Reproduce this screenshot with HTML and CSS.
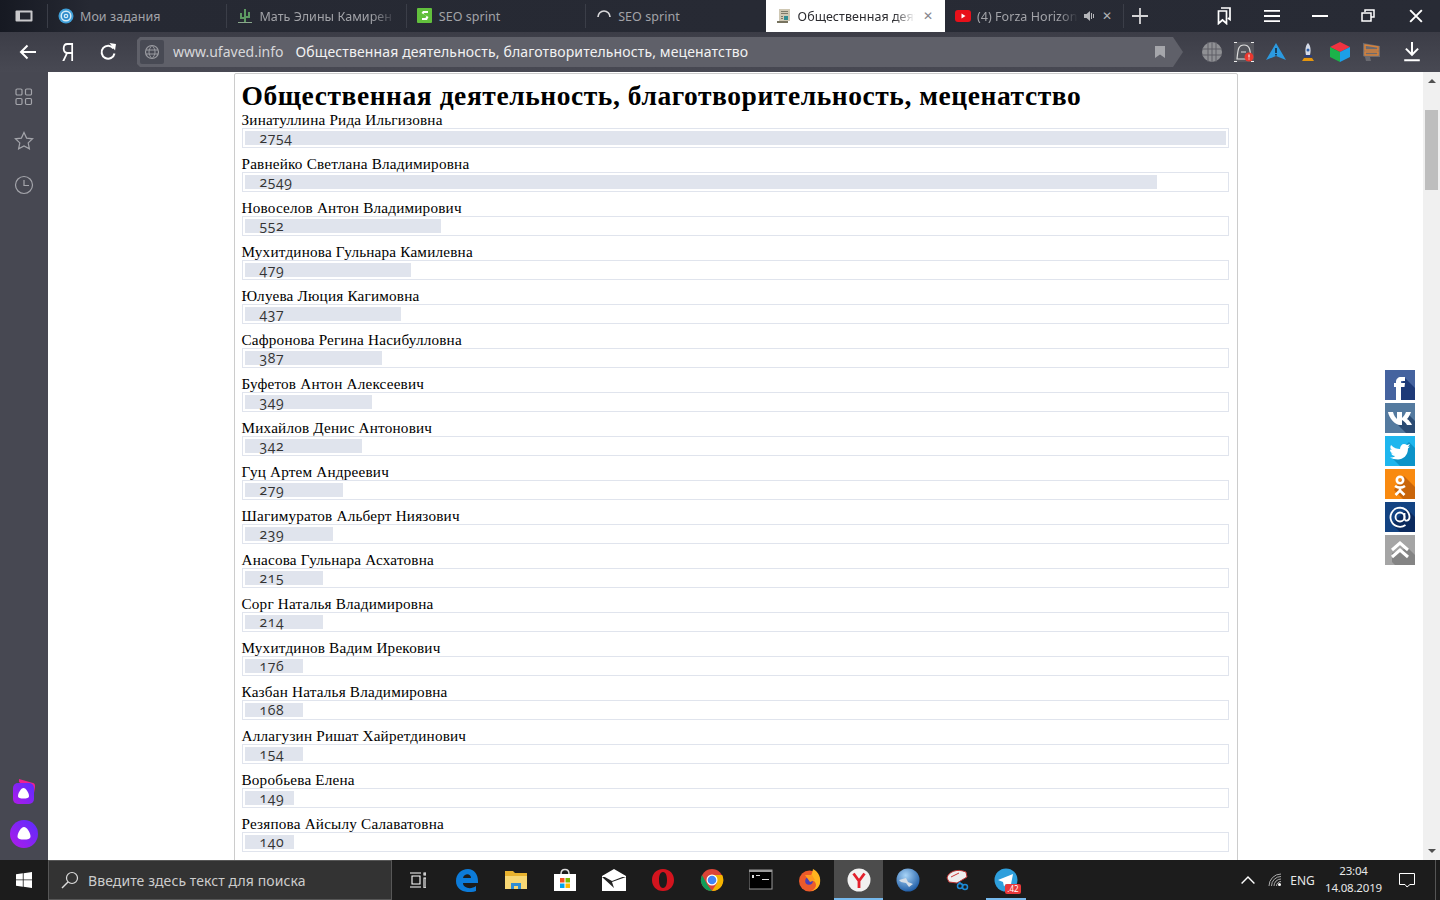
FILE: index.html
```html
<!DOCTYPE html>
<html lang="ru">
<head>
<meta charset="utf-8">
<title>Общественная деятельность</title>
<link rel="stylesheet" href="styles.css">
</head>
<body>
<div class="app">
  <header class="tabbar">
    <div class="tabs-toggle"><svg class="ico16" viewBox="0 0 18 12"><rect x="0.5" y="0.5" width="17" height="11" rx="1" fill="#c9c9cc"/><rect x="5" y="2.5" width="10.500" height="7" fill="#23262f"/></svg></div>
    <div class="tab sep"><svg class="favicon" viewBox="0 0 16 16"><circle cx="8" cy="8" r="7.500" fill="#3f9fd8"/><circle cx="8" cy="8" r="5.500" fill="#d5ecf8"/><circle cx="8" cy="8" r="4" fill="#2f8ccb"/><circle cx="8" cy="8" r="2.300" fill="#d5ecf8"/><circle cx="8" cy="8" r="1.100" fill="#2f8ccb"/></svg><span class="tab-title">Мои задания</span></div>
    <div class="tab sep"><svg class="favicon" viewBox="0 0 16 16"><path d="M7 1h2v13H7zM3 5h2v4h2v2H3zM11 4h2v6H9V8h2z" fill="#5d9a62"/><path d="M1 14h14v1H1z" fill="#8aa78c"/></svg><span class="tab-title tab-fade">Мать Элины Камирен</span></div>
    <div class="tab sep"><svg class="favicon" viewBox="0 0 16 16"><rect width="15" height="15" rx="1" fill="#62c03d"/><path d="M11 3H6L4.500 5l5 3-1 2H5v2h5l1.500-3-5-3 .7-1H11z" fill="#fff"/></svg><span class="tab-title">SEO sprint</span></div>
    <div class="tab"><svg class="favicon" viewBox="0 0 16 16"><path d="M2 9a6 6 0 0 1 12 0" fill="none" stroke="#d8d8da" stroke-width="1.700"/></svg><span class="tab-title">SEO sprint</span></div>
    <div class="tab tab-active"><svg class="favicon" viewBox="0 0 16 16"><path d="M3 1h11v12H3z" fill="#cfc8b4"/><path d="M1 13h11v2H1z" fill="#77735f"/><path d="M5 3h7v1H5zM5 5h7v1H5z" fill="#7c7a6a"/><path d="M8 8h4v4H8z" fill="#2e8c92"/><path d="M5 8h2v1H5zM5 10h2v1H5z" fill="#7c7a6a"/></svg><span class="tab-title tab-fade">Общественная деят</span><span class="tab-close">✕</span></div>
    <div class="tab sep"><svg class="favicon" viewBox="0 0 16 16"><rect y="2" width="16" height="12" rx="3" fill="#e8101a"/><path d="M6.500 5.500v5l4-2.500z" fill="#fff"/></svg><span class="tab-title tab-fade">(4) Forza Horizon</span><svg class="tab-sound" viewBox="0 0 12 10"><path d="M0 3h2.500L6 0v10L2.500 7H0z" fill="#b6b7bb"/><path d="M7.500 2v6M9.500 3v4" stroke="#b6b7bb"/></svg><span class="tab-close tab-close-dark">✕</span></div>
    <div class="newtab"><svg class="ico16" viewBox="0 0 14 14"><path d="M7 0v14M0 7h14" stroke="#d4d4d6" stroke-width="1.600"/></svg></div>
    <div class="window-controls">
      <div class="winbtn"><svg class="ico18" viewBox="0 0 16 18"><path d="M5 1h9v11.500l-2-1.500M2.500 4H10.500V16.500L6.500 13 2.500 16.500Z" fill="none" stroke="#fff" stroke-width="1.700"/></svg></div>
      <div class="winbtn"><svg class="ico16" viewBox="0 0 14 12"><path d="M0 1.500h14M0 6h14M0 10.500h14" stroke="#fff" stroke-width="1.700"/></svg></div>
      <div class="winbtn"><svg class="ico16" viewBox="0 0 12 12"><path d="M0 6h12" stroke="#fff" stroke-width="1.500"/></svg></div>
      <div class="winbtn"><svg class="ico14" viewBox="0 0 14 14"><path d="M4 3V1h9v7h-2.500M1 4h9v8H1z" fill="none" stroke="#fff" stroke-width="1.500"/></svg></div>
      <div class="winbtn"><svg class="ico14" viewBox="0 0 12 12"><path d="M1 1l10 10M11 1L1 11" stroke="#fff" stroke-width="1.700"/></svg></div>
    </div>
  </header>

  <nav class="toolbar">
    <div class="toolbtn"><svg class="ico18" viewBox="0 0 18 16"><path d="M17 8H2M8.500 1.500L2 8l6.500 6.500" fill="none" stroke="#fff" stroke-width="2"/></svg></div>
    <div class="toolbtn"><span class="ya">Я</span></div>
    <div class="toolbtn"><svg class="ico18" viewBox="0 0 18 18"><path d="M14.500 5.500a6.500 6.500 0 1 0 1 5" fill="none" stroke="#fff" stroke-width="2"/><path d="M10 .500h6.500V7z" fill="#fff" transform="rotate(8 13 4)"/></svg></div>
    <div class="address">
      <div class="address-lock"><svg class="ico16" viewBox="0 0 16 16"><circle cx="8" cy="8" r="6.500" fill="none" stroke="#9a9ba1" stroke-width="1.200"/><path d="M2 6h12M2 10h12M8 1.500C4 5 4 11 8 14.500M8 1.500c4 3.500 4 9.500 0 13" fill="none" stroke="#9a9ba1"/></svg></div>
      <span class="domain">www.ufaved.info</span>
      <span class="page-title">Общественная деятельность, благотворительность, меценатство</span>
      <svg class="address-mark" viewBox="0 0 10 12"><path d="M0 0h10v12L5 8.500 0 12z" fill="#a5a6ab"/></svg>
    </div>
    <div class="ext ext-first"><svg class="ico20" viewBox="0 0 20 20"><circle cx="10" cy="10" r="10" fill="#8f9094"/><path d="M0 7h20M0 13h20M6 0v20M14 0v20M10 0v20" stroke="#5e5f66" stroke-width="1"/></svg></div>
    <div class="ext"><svg class="ico20" viewBox="0 0 20 20"><rect width="20" height="20" fill="#55565d"/><path d="M0 0h3M17 0h3M0 20h3M17 20h3" stroke="#eee" stroke-width="2"/><path d="M3 17C4 8 4 3 10 3s6 5 7 14z" fill="#53545b" stroke="#ddd" stroke-width="1.200"/><path d="M7 10h5" stroke="#ddd"/><circle cx="15" cy="15" r="4.500" fill="#e8382f"/><path d="M15 12.500v3M15 16.500v1" stroke="#fff"/></svg></div>
    <div class="ext"><svg class="ico20" viewBox="0 0 20 20"><path d="M10 1L20 18 10 14 0 18z" fill="#2b9ae0"/><path d="M10 6v5M10 12v1.500" stroke="#123" stroke-width="1.500"/></svg></div>
    <div class="ext"><svg class="ico20" viewBox="0 0 20 20"><path d="M10 1c3 3 3 8 2 12H8C7 9 7 4 10 1z" fill="#d5dbe8"/><circle cx="10" cy="8" r="1.500" fill="#2c5ea8"/><path d="M6 13h8v2H6z" fill="#2c3e78"/><path d="M6 16h8l2 3H4z" fill="#e6960e"/></svg></div>
    <div class="ext"><svg class="ico20" viewBox="0 0 20 20"><path d="M10 0l10 5-10 5L0 5z" fill="#ef3340"/><path d="M0 5l10 5v10L0 15z" fill="#1bb34a"/><path d="M20 5l-10 5v10l10-5z" fill="#1c9fe8"/></svg></div>
    <div class="ext"><svg class="ico20" viewBox="0 0 20 20"><path d="M1 1l17 3v11H8l1 4H4l-1-4-2-1z" fill="#6a6a70"/><path d="M3 3l13 2v3H3zM3 10h13v3H3z" fill="none" stroke="#d8823a" stroke-width="1.500"/></svg></div>
    <div class="ext ext-last"><svg class="ico20" viewBox="0 0 16 18"><path d="M8 0v11M2.500 6L8 11.500 13.500 6M1 16.500h14" fill="none" stroke="#fff" stroke-width="1.800"/></svg></div>
  </nav>

  <div class="main">
    <aside class="sidebar">
      <div class="side-item"><svg class="ico18" viewBox="0 0 18 18"><g fill="none" stroke="#a4a5ab" stroke-width="1.200"><rect x="1" y="1" width="6" height="6" rx="1.200"/><rect x="10.500" y="1" width="6" height="6" rx="1.200"/><rect x="1" y="10.500" width="6" height="6" rx="1.200"/><rect x="10.500" y="10.500" width="6" height="6" rx="1.200"/></g></svg></div>
      <div class="side-item"><svg class="ico20" viewBox="0 0 20 20"><path d="M10 1.500l2.600 5.600 6 .7-4.400 4.100 1.200 6L10 15l-5.400 2.900 1.200-6L1.400 7.800l6-.7z" fill="none" stroke="#a4a5ab" stroke-width="1.200"/></svg></div>
      <div class="side-item"><svg class="ico20" viewBox="0 0 20 20"><circle cx="10" cy="10" r="8.500" fill="none" stroke="#a4a5ab" stroke-width="1.200"/><path d="M10 5v5.500h5" fill="none" stroke="#a4a5ab" stroke-width="1.200"/></svg></div>
      <div class="side-alice side-alice-first"><svg class="ico28" viewBox="0 2 28 28"><defs><linearGradient id="al" x1="0" y1="1" x2="1" y2="0"><stop offset="0" stop-color="#b01be8"/><stop offset="1" stop-color="#5a2cff"/></linearGradient></defs><path d="M9 2l14 4c2 .5 2 2 2 4l-1 6L9 5z" fill="#f0208f"/><rect x="3" y="6" width="21" height="21" rx="5" fill="url(#al)"/><path d="M13.500 11c2.500 0 5.500 5 5.500 8 0 2-2.500 2.500-5.500 2.500S8 21 8 19c0-3 3-8 5.500-8z" fill="#fff"/></svg></div>
      <div class="side-alice"><svg class="ico28" viewBox="0 0 28 28"><circle cx="14" cy="14" r="14" fill="url(#al)"/><path d="M14 7c3 0 6.500 6 6.500 9.500 0 2.500-3 3-6.500 3s-6.500-.5-6.500-3C7.500 13 11 7 14 7z" fill="#fff"/></svg></div>
    </aside>

    <div class="content">
      <article class="card">
        <h1 class="title">Общественная деятельность, благотворительность, меценатство</h1>
        <div class="row"><div class="name">Зинатуллина Рида Ильгизовна</div><div class="track"><div class="fill" style="width:100%"><span class="num">2754</span></div></div></div>
        <div class="row"><div class="name">Равнейко Светлана Владимировна</div><div class="track"><div class="fill" style="width:93%"><span class="num">2549</span></div></div></div>
        <div class="row"><div class="name">Новоселов Антон Владимирович</div><div class="track"><div class="fill" style="width:20%"><span class="num">552</span></div></div></div>
        <div class="row"><div class="name">Мухитдинова Гульнара Камилевна</div><div class="track"><div class="fill" style="width:17%"><span class="num">479</span></div></div></div>
        <div class="row"><div class="name">Юлуева Люция Кагимовна</div><div class="track"><div class="fill" style="width:16%"><span class="num">437</span></div></div></div>
        <div class="row"><div class="name">Сафронова Регина Насибулловна</div><div class="track"><div class="fill" style="width:14%"><span class="num">387</span></div></div></div>
        <div class="row"><div class="name">Буфетов Антон Алексеевич</div><div class="track"><div class="fill" style="width:13%"><span class="num">349</span></div></div></div>
        <div class="row"><div class="name">Михайлов Денис Антонович</div><div class="track"><div class="fill" style="width:12%"><span class="num">342</span></div></div></div>
        <div class="row"><div class="name">Гуц Артем Андреевич</div><div class="track"><div class="fill" style="width:10%"><span class="num">279</span></div></div></div>
        <div class="row"><div class="name">Шагимуратов Альберт Ниязович</div><div class="track"><div class="fill" style="width:9%"><span class="num">239</span></div></div></div>
        <div class="row"><div class="name">Анасова Гульнара Асхатовна</div><div class="track"><div class="fill" style="width:8%"><span class="num">215</span></div></div></div>
        <div class="row"><div class="name">Сорг Наталья Владимировна</div><div class="track"><div class="fill" style="width:8%"><span class="num">214</span></div></div></div>
        <div class="row"><div class="name">Мухитдинов Вадим Ирекович</div><div class="track"><div class="fill" style="width:6%"><span class="num">176</span></div></div></div>
        <div class="row"><div class="name">Казбан Наталья Владимировна</div><div class="track"><div class="fill" style="width:6%"><span class="num">168</span></div></div></div>
        <div class="row"><div class="name">Аллагузин Ришат Хайретдинович</div><div class="track"><div class="fill" style="width:6%"><span class="num">154</span></div></div></div>
        <div class="row"><div class="name">Воробьева Елена</div><div class="track"><div class="fill" style="width:5%"><span class="num">149</span></div></div></div>
        <div class="row"><div class="name">Резяпова Айсылу Салаватовна</div><div class="track"><div class="fill" style="width:5%"><span class="num">140</span></div></div></div>
      </article>
    </div>

    <div class="scrollbar">
      <div class="scroll-btn"><span class="arrow-up"></span></div>
      <div class="scroll-thumb"></div>
      <div class="scroll-btn scroll-btn-end"><span class="arrow-down"></span></div>
    </div>

    <div class="social">
      <div class="soc soc-fb"><svg viewBox="0 0 30 30"><path d="M20 8l10 10v12H14V18z" fill="#1e3a78"/><path d="M11 30V17H9v-4h2v-1c0-3 2-5 5-5h4v4h-3c-1 0-1 .5-1 1v1h4l-.5 4H16v13z" fill="#fff"/></svg></div>
      <div class="soc soc-vk"><svg viewBox="0 0 30 30"><path d="M12 21l9 9h9V18l-6-6z" fill="#2b4b73"/><path d="M3 9h5c1 4 3 6 4 7V9h5v6c1-1 3-3 4-6h5c-1 3-3 6-4 7 2 1 4 4 5 6h-5c-1-2-3-4-5-5v5h-2C10 22 4 15 3 9z" fill="#fff"/></svg></div>
      <div class="soc soc-tw"><svg viewBox="0 0 30 30"><path d="M7 22l8 8h15V12l-6-6z" fill="#0c93c8"/><path d="M6 9c3 3 6 4 9 4 0-3 2-5 4-5 1 0 2 .5 3 1l3-1-2 3 2-.5-2 2c0 7-5 11-10 11-3 0-6-1-8-2 2 0 4-.5 5-1.500-2 0-3-1-4-2.500h2c-2-.5-3-2-3-4l2 .5c-2-1-2-3-1-5z" fill="#fff"/></svg></div>
      <div class="soc soc-ok"><svg viewBox="0 0 30 30"><path d="M19 7l11 11v12H18l-9-9z" fill="#c9650a"/><circle cx="15" cy="11" r="3.200" fill="none" stroke="#fff" stroke-width="2.600"/><path d="M10 17c3 2 7 2 10 0M15 19v2.500M10.500 26l4.500-4.500 4.500 4.500" fill="none" stroke="#fff" stroke-width="2.600"/></svg></div>
      <div class="soc soc-at"><svg viewBox="0 0 30 30"><path d="M22 7l8 8v15H15l-8-8z" fill="#0b2a5e"/><circle cx="15" cy="15" r="4.500" fill="none" stroke="#fff" stroke-width="1.800"/><path d="M19.500 11v5.500c0 3 5 3 5-1.500a9.500 9.500 0 1 0-4 8" fill="none" stroke="#fff" stroke-width="1.800"/></svg></div>
      <div class="soc soc-up"><svg viewBox="0 0 30 30"><path d="M23 13l7 7v10H10l-3-3V18z" fill="#848484"/><path d="M7 15l8-7 8 7M7 22l8-7 8 7" fill="none" stroke="#fff" stroke-width="3"/></svg></div>
    </div>
  </div>

  <footer class="taskbar">
    <div class="start"><svg class="ico16" viewBox="0 0 16 16"><path d="M0 2.300L6.800 1.300V7.500H0zM7.600 1.200L16 0V7.500H7.600zM0 8.300H6.800V14.700L0 13.700zM7.600 8.300H16V16L7.600 14.800z" fill="#fff"/></svg></div>
    <div class="search"><svg class="ico18" viewBox="0 0 18 18"><circle cx="11" cy="7" r="5.500" fill="none" stroke="#ddd" stroke-width="1.200"/><path d="M7 11l-6 6" stroke="#ddd" stroke-width="1.400"/></svg><span class="search-text">Введите здесь текст для поиска</span></div>
    <div class="apps">
      <div class="app-item"><svg class="ico16" viewBox="0 0 16 16"><path d="M0 1h11M0 15h11M2 4h8v8H2zM14 1h2v2h-2zM14 6h2v10h-2z" fill="none" stroke="#fff" stroke-width="1.100"/></svg></div>
      <div class="app-item"><svg class="ico24" viewBox="0 0 24 24"><path fill-rule="evenodd" d="M1 13C1 6 6 1 13 1c6 0 10 5 10 12v2H8c0 5 8 7 13 3v5c-9 3-20 0-20-10zM8 10h8c0-5-7-5-8 0z" fill="#0c7bd9"/></svg></div>
      <div class="app-item"><svg class="ico24" viewBox="0 0 24 24"><path d="M1 3h8l2 2h12v16H1z" fill="#e8b22e"/><path d="M1 8h22v13H1z" fill="#f7d774"/><path d="M7 21v-6h10v6h-3v-3h-4v3z" fill="#2f8dd4"/></svg></div>
      <div class="app-item"><svg class="ico24" viewBox="0 0 24 24"><path d="M1 6h22v17H1z" fill="#fff"/><path d="M8 6c0-6 8-6 8 0" fill="none" stroke="#ddd" stroke-width="1.500"/><path d="M7 10h4.500v4.500H7z" fill="#f25022"/><path d="M12.500 10H17v4.500h-4.500z" fill="#7fba00"/><path d="M7 15.500h4.500V20H7z" fill="#00a4ef"/><path d="M12.500 15.500H17V20h-4.500z" fill="#ffb900"/></svg></div>
      <div class="app-item"><svg class="ico24" viewBox="0 0 24 24"><path d="M0 8L12 1l12 7v15H0z" fill="#fff"/><path d="M0 9l24 0-14 5 2 6z" fill="#222"/><path d="M1 8l11-6 11 6-13 5z" fill="#fff"/></svg></div>
      <div class="app-item"><svg class="ico24" viewBox="0 0 24 24"><path fill-rule="evenodd" d="M12 1c7 0 11 5 11 11s-4 11-11 11S1 18 1 12 5 1 12 1zm0 3c-3 0-4 4-4 8s1 8 4 8 4-4 4-8-1-8-4-8z" fill="#d3141e"/></svg></div>
      <div class="app-item"><svg class="ico24" viewBox="0 0 24 24"><circle cx="12" cy="12" r="11" fill="#db4437"/><path d="M2 7l5.500 10 4.500 6A11 11 0 0 1 2 7z" fill="#0f9d58"/><path d="M12 7h10.200A11 11 0 0 1 12 23l5-8z" fill="#f4b400"/><circle cx="12" cy="12" r="5.500" fill="#fff"/><circle cx="12" cy="12" r="4.300" fill="#4285f4"/></svg></div>
      <div class="app-item"><svg class="ico24" viewBox="0 0 24 24"><rect y="2" width="23" height="19" fill="#000" stroke="#9a9a9a"/><path d="M0 2h23v2H0z" fill="#9a9a9a"/><path d="M3 7h2v3H3zM7 7h4v1H7zM13 11h7v1h-7z" fill="#ddd"/></svg></div>
      <div class="app-item"><svg class="ico24" viewBox="0 0 24 24"><circle cx="11.500" cy="13" r="10.500" fill="#ec5a2a"/><path d="M15 1c6 3 8 9 7 14-1 6-7 8-9 8 5-2 6-6 4-9-2-2-5-2-6 0 0-3 3-7 4-13z" fill="#ffb41f"/><circle cx="11" cy="13" r="3.800" fill="#4a3fb8"/><path d="M7 7h7l3 5-5 2z" fill="#ff9a1f"/></svg></div>
      <div class="app-item app-active"><svg class="ico24" viewBox="0 0 24 24"><circle cx="12" cy="12" r="11.500" fill="#f1f1f1"/><path d="M6.500 5.500L12 13l5.500-7.500M12 13v7" fill="none" stroke="#e3202c" stroke-width="2.800"/></svg></div>
      <div class="app-item"><svg class="ico24" viewBox="0 0 24 24"><defs><radialGradient id="gl" cx=".4" cy=".3" r=".8"><stop offset="0" stop-color="#a8d4f7"/><stop offset="1" stop-color="#0f4f9d"/></radialGradient></defs><circle cx="12" cy="12" r="11.500" fill="url(#gl)"/><path d="M3 12l7-2 2 4 5 2-4 3-3-4-5-1z" fill="#d5dde6"/></svg></div>
      <div class="app-item"><svg class="ico24" viewBox="0 0 24 24"><path d="M2 10C3 4 12 0 21 4l1 5-10 6-8-1z" fill="#eee" stroke="#b33" stroke-width="1"/><path d="M6 9l8-4" stroke="#c33"/><circle cx="15" cy="18" r="2.500" fill="none" stroke="#1d8ad6" stroke-width="1.500"/><circle cx="20" cy="19" r="2.500" fill="none" stroke="#1d8ad6" stroke-width="1.500"/><path d="M14 14l4 3" stroke="#1d8ad6" stroke-width="1.500"/></svg></div>
      <div class="app-item app-running"><svg class="ico24" viewBox="0 0 24 24"><circle cx="12" cy="12" r="11.500" fill="#2e9fdc"/><path d="M4 12l15-6-2.500 13-4.500-3-2 2.500-1-4.500z" fill="#fff"/></svg><span class="badge">.42</span></div>
    </div>
    <div class="tray">
      <div class="tray-caret"><svg class="ico14" viewBox="0 0 12 8"><path d="M.5 7L6 1.500 11.500 7" fill="none" stroke="#fff" stroke-width="1.200"/></svg></div>
      <div class="tray-wifi"><svg class="ico14" viewBox="0 0 14 14"><path d="M1 13A12 12 0 0 1 13 1M3.500 13A9.500 9.500 0 0 1 13 3.500M6 13a7 7 0 0 1 7-7M8.500 13A4.500 4.500 0 0 1 13 8.500" fill="none" stroke="#aaa"/><circle cx="11.500" cy="11.500" r="1.500" fill="#fff"/></svg></div>
      <div class="tray-lang">ENG</div>
      <div class="tray-clock"><div>23:04</div><div>14.08.2019</div></div>
      <div class="tray-note"><svg class="ico16" viewBox="0 0 16 16"><path d="M.5 1.500h15v11h-4.500L8 15l-2-2.500H.5z" fill="none" stroke="#fff"/></svg></div>
      <div class="tray-desk"></div>
    </div>
  </footer>
</div>
</body>
</html>
```

FILE: styles.css
```css
* { box-sizing: border-box; }
html, body { margin: 0; padding: 0; height: 100%; overflow: hidden; }
body { font-family: "Noto Sans", "Open Sans", sans-serif; background: #fff; }
svg { display: block; flex: none; }
.ico14 { width: 14px; height: 14px; }
.ico16 { width: 16px; height: 16px; }
.ico18 { width: 18px; height: 18px; }
.ico20 { width: 20px; height: 20px; }
.ico24 { width: 24px; height: 24px; }
.ico28 { width: 28px; height: 28px; }

.app { display: flex; flex-direction: column; width: 1440px; height: 900px; }

/* tab strip */
.tabbar { display: flex; align-items: stretch; height: 32px; flex: none; background: linear-gradient(90deg, #161922 0, #262933 90px, #282b35 100%); color: #a2a3a8; font-size: 12.500px; }
.tabs-toggle { flex: none; width: 48px; display: flex; align-items: center; justify-content: center; position: relative; }
.tabs-toggle .ico16 { width: 18px; }
.tab { flex: none; width: 179.400px; min-width: 0; display: flex; align-items: center; padding: 0 10px; gap: 6px; position: relative; }
.tab.sep::after { content: ""; position: absolute; right: 0; top: 4px; bottom: 4px; width: 1px; background: #3b3e48; }
.tabs-toggle::after { content: ""; position: absolute; right: 0; top: 4px; bottom: 4px; width: 1px; background: #3b3e48; }
.tab-active.tab { background: #fff; color: #2c2c30; }
.favicon { width: 16px; height: 16px; }
.tab-title { flex: 1; min-width: 0; white-space: nowrap; letter-spacing: .05px; }
.tab-fade { -webkit-mask-image: linear-gradient(90deg, #000 82%, transparent 100%); mask-image: linear-gradient(90deg, #000 82%, transparent 100%); }
.tab-close { flex: none; font-size: 12px; color: #85868b; line-height: 1; width: 14px; text-align: center; }
.tab-close-dark { color: #b0b1b5; margin-left: -2px; }
.tab-sound { width: 12px; height: 10px; }
.newtab { flex: none; width: 32px; display: flex; align-items: center; justify-content: center; }
.window-controls { margin-left: auto; flex: none; display: flex; width: 240px; }
.winbtn { width: 48px; display: flex; align-items: center; justify-content: center; }

/* address row */
.toolbar { display: flex; flex: none; align-items: center; height: 40px; padding-left: 8px; background: linear-gradient(180deg, #3c3d47 0, #484953 100%); color: #fff; }
.toolbtn { width: 40px; height: 40px; flex: none; display: flex; align-items: center; justify-content: center; }
.ya { display: block; font-size: 25px; line-height: 1; font-family: "Liberation Sans", sans-serif; transform: scaleX(.72); }
.address { flex: none; margin-left: 9px; width: 1046px; height: 30px; display: flex; align-items: center; padding-left: 3px; background: #5f6069; clip-path: polygon(0 3px, 3px 0, 1036px 0, 100% 50%, 1036px 100%, 3px 100%, 0 27px); font-size: 14px; }
.address-lock { width: 24px; height: 24px; background: #484a54; border-radius: 2px; display: flex; align-items: center; justify-content: center; }
.domain { margin: 0 0 2px 9px; color: #d7d7da; }
.page-title { margin: 0 0 2px 12px; color: #f2f2f3; letter-spacing: .13px; }
.address-mark { width: 10px; height: 12px; margin-left: auto; margin-right: 18px; }
.ext { width: 32px; flex: none; display: flex; justify-content: center; }
.ext-first { margin-left: 13px; }
.ext-last { margin-left: 8px; }

/* main area */
.main { flex: 1; min-height: 0; display: flex; position: relative; }
.sidebar { width: 48px; flex: none; display: flex; flex-direction: column; padding: 3px 0 6px; background: #474852; }
.side-item { height: 44px; display: flex; align-items: center; justify-content: center; }
.side-alice { height: 41px; display: flex; align-items: center; justify-content: center; }
.side-alice-first { margin-top: auto; }
.content { flex: 1; min-width: 0; overflow: hidden; background: #fff; padding-top: 1px; }
.card { width: 1004px; margin: 0 auto; padding: 0 8px 40px 7px; border: 1px solid #ccc; border-radius: 2px 2px 0 0; color: #000; font-family: "Liberation Serif", serif; }
.title { margin: 0; height: 38px; padding-top: 7px; font-size: 27.500px; line-height: 30px; letter-spacing: .56px; font-weight: 700; white-space: nowrap; }
.row { margin-bottom: 8px; }
.name { height: 16px; font-size: 15.200px; line-height: 16px; letter-spacing: .2px; white-space: nowrap; }
.track { height: 20px; padding: 2px; border: 1px solid #e0e4ed; }
.fill { height: 14px; background: #e0e4ed; padding-left: 15px; white-space: nowrap; }
.num { display: block; font-family: "Open Sans", sans-serif; font-variant-numeric: oldstyle-nums; font-feature-settings: "onum"; font-size: 14px; line-height: 13px; letter-spacing: .6px; color: #333; }

/* scrollbar */
.scrollbar { width: 17px; flex: none; display: flex; flex-direction: column; background: #f0f0f0; }
.scroll-btn { height: 18px; flex: none; display: flex; align-items: center; justify-content: center; }
.scroll-btn-end { margin-top: auto; }
.scroll-thumb { margin: 20px 2px 0; height: 80px; background: #bebebe; }
.arrow-up, .arrow-down { width: 0; height: 0; border-left: 4px solid transparent; border-right: 4px solid transparent; }
.arrow-up { border-bottom: 4px solid #505050; }
.arrow-down { border-top: 4px solid #505050; }

/* share buttons */
.social { position: absolute; top: 298px; right: 25px; display: flex; flex-direction: column; gap: 3px; }
.soc { width: 30px; height: 30px; overflow: hidden; }
.soc svg { width: 30px; height: 30px; }
.soc-fb { background: #45639f; }
.soc-vk { background: #547a9f; }
.soc-tw { background: #1eb6ee; }
.soc-ok { background: #f98a10; }
.soc-at { background: #134382; }
.soc-up { background: #a5a5a5; }

/* windows taskbar */
.taskbar { height: 40px; flex: none; display: flex; background: #1c1c1c; color: #fff; }
.start { width: 48px; flex: none; display: flex; align-items: center; justify-content: center; }
.search { width: 344px; flex: none; display: flex; align-items: center; padding-left: 12px; background: #333; border: 1px solid #575757; font-size: 14px; color: #ccc; }
.search-text { margin-left: 9px; letter-spacing: .08px; }
.apps { display: flex; margin-left: 1px; }
.app-item { width: 49px; display: flex; align-items: center; justify-content: center; position: relative; }
.app-active { background: #4c4c4c; box-shadow: inset 0 -2px 0 #76b9ed; }
.app-running::after { content: ""; position: absolute; left: 5px; right: 4px; bottom: 0; height: 2px; background: #76b9ed; }
.badge { position: absolute; left: 24px; top: 24px; width: 16px; height: 10px; border-radius: 2px; background: #e9383a; color: #fff; font-size: 8px; line-height: 10px; text-align: center; }
.tray { margin-left: auto; display: flex; align-items: center; height: 100%; font-size: 12px; color: #e8e8e8; }
.tray-caret { width: 32px; display: flex; justify-content: center; }
.tray-wifi { width: 22px; display: flex; justify-content: center; }
.tray-lang { width: 33px; text-align: center; }
.tray-clock { width: 69px; padding-bottom: 2px; text-align: center; font-size: 11.500px; letter-spacing: -.2px; line-height: 17px; }
.tray-note { width: 38px; display: flex; justify-content: center; }
.tray-desk { width: 14px; height: 100%; position: relative; }
.tray-desk::before { content: ""; position: absolute; left: 9px; top: 0; bottom: 0; width: 1px; background: #555; }
```
